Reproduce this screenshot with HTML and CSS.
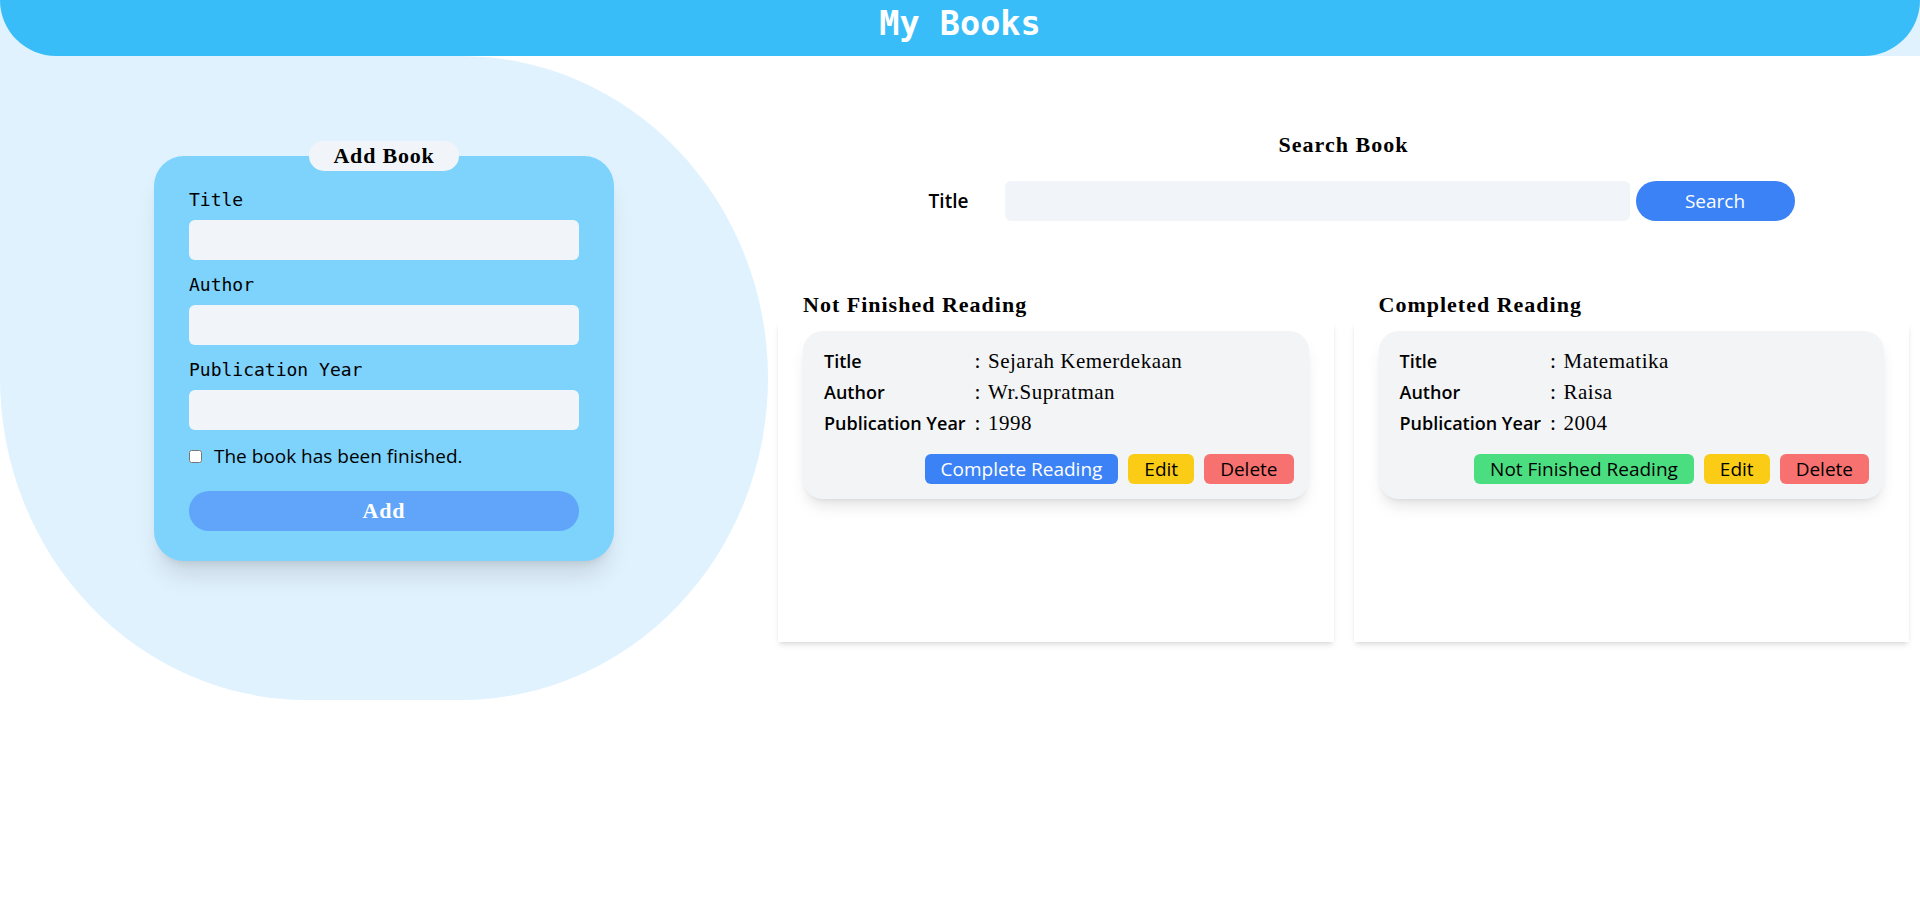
FILE: index.html
```html
<!DOCTYPE html>
<html lang="en">
<head>
<meta charset="utf-8">
<title>My Books</title>
<link rel="stylesheet" href="styles.css">
</head>
<body>
<div class="top">
  <header class="header">My Books</header>
</div>
<main class="main">
  <section class="left">
    <form class="add-card">
      <h2 class="pill">Add Book</h2>
      <label class="field-label" for="t">Title</label>
      <input class="field" id="t" type="text">
      <label class="field-label" for="a">Author</label>
      <input class="field" id="a" type="text">
      <label class="field-label" for="y">Publication Year</label>
      <input class="field" id="y" type="text">
      <div class="check-row">
        <input class="check" type="checkbox" id="c">
        <label class="check-text" for="c">The book has been finished.</label>
      </div>
      <button class="add-btn" type="button">Add</button>
    </form>
  </section>
  <section class="right">
    <h2 class="search-title">Search Book</h2>
    <form class="search-row">
      <label class="search-label" for="s">Title</label>
      <input class="search-input" id="s" type="text">
      <button class="search-btn" type="button">Search</button>
    </form>
    <div class="shelves">
      <div class="shelf">
        <h2 class="shelf-title">Not Finished Reading</h2>
        <div class="shelf-panel">
          <article class="book">
            <div class="book-info">
              <span class="k">Title</span><span class="c">:</span><span class="v">Sejarah Kemerdekaan</span>
              <span class="k">Author</span><span class="c">:</span><span class="v">Wr.Supratman</span>
              <span class="k">Publication Year</span><span class="c">:</span><span class="v">1998</span>
            </div>
            <div class="actions">
              <button class="btn btn-blue" type="button">Complete Reading</button>
              <button class="btn btn-yellow" type="button">Edit</button>
              <button class="btn btn-red" type="button">Delete</button>
            </div>
          </article>
        </div>
      </div>
      <div class="shelf">
        <h2 class="shelf-title">Completed Reading</h2>
        <div class="shelf-panel">
          <article class="book">
            <div class="book-info">
              <span class="k">Title</span><span class="c">:</span><span class="v">Matematika</span>
              <span class="k">Author</span><span class="c">:</span><span class="v">Raisa</span>
              <span class="k">Publication Year</span><span class="c">:</span><span class="v">2004</span>
            </div>
            <div class="actions">
              <button class="btn btn-green" type="button">Not Finished Reading</button>
              <button class="btn btn-yellow" type="button">Edit</button>
              <button class="btn btn-red" type="button">Delete</button>
            </div>
          </article>
        </div>
      </div>
    </div>
  </section>
</main>
</body>
</html>
```
FILE: styles.css
```css
* { box-sizing: border-box; }

body {
  margin: 0;
  background: #ffffff;
  color: #000000;
  font-family: "Open Sans", "Noto Sans", sans-serif;
}

.top {
  background: #e0f2fe;
}

.header {
  height: 56px;
  background: #38bdf8;
  border-radius: 0 0 56px 56px;
  color: #ffffff;
  text-align: center;
  font-family: "DejaVu Sans Mono", monospace;
  font-weight: bold;
  font-size: 33.5px;
  line-height: 47px;
}

.main {
  display: flex;
  align-items: flex-start;
}

/* left blob */
.left {
  width: 40%;
  height: 644px;
  background: #e0f2fe;
  border-radius: 0 40% 40% 40% / 0 50% 50% 50%;
  padding-top: 100px;
  display: flex;
  justify-content: center;
  align-items: flex-start;
}

.add-card {
  position: relative;
  width: 460px;
  background: #7dd3fc;
  border-radius: 30px;
  padding: 32px 35px 30px;
  box-shadow: 0 20px 25px -5px rgba(0, 0, 0, 0.1), 0 8px 10px -6px rgba(0, 0, 0, 0.1);
}

.pill {
  position: absolute;
  top: -15px;
  left: 50%;
  transform: translateX(-50%);
  width: 150px;
  height: 30px;
  margin: 0;
  border-radius: 15px;
  background: #f1f5f9;
  text-align: center;
  font-family: "Liberation Serif", serif;
  font-weight: bold;
  font-size: 22px;
  letter-spacing: 0.8px;
  line-height: 30px;
}

.field-label {
  display: block;
  font-family: "DejaVu Sans Mono", monospace;
  font-size: 18px;
  line-height: 24px;
  margin-bottom: 8px;
}

.field {
  display: block;
  width: 100%;
  height: 40px;
  border: none;
  border-radius: 6px;
  background: #f1f5f9;
  margin: 0 0 13px;
}

.check-row {
  display: flex;
  align-items: center;
  height: 26px;
  gap: 12px;
}

.check {
  margin: 0;
  width: 13px;
  height: 13px;
}

.check-text {
  font-size: 19px;
}

.add-btn {
  display: block;
  width: 100%;
  height: 40px;
  margin-top: 22px;
  border: none;
  border-radius: 20px;
  background: #60a5fa;
  color: #ffffff;
  font-family: "Liberation Serif", serif;
  font-weight: bold;
  font-size: 22px;
  letter-spacing: 0.8px;
}

/* right side */
.right {
  width: 60%;
  padding: 76px 11px 0 10px;
}

.search-title {
  margin: 0;
  text-align: center;
  font-family: "Liberation Serif", serif;
  font-weight: bold;
  font-size: 22px;
  letter-spacing: 1px;
  line-height: 26px;
}

.search-row {
  display: flex;
  width: 902px;
  height: 40px;
  margin: 23px auto 0;
}

.search-label {
  width: 112px;
  text-align: center;
  line-height: 40px;
  font-size: 19px;
  font-weight: 600;
}

.search-input {
  flex: 1;
  height: 40px;
  border: none;
  border-radius: 6px;
  background: #f1f5f9;
}

.search-btn {
  width: 159px;
  height: 40px;
  margin-left: 6px;
  border: none;
  border-radius: 20px;
  background: #3b82f6;
  color: #ffffff;
  font-family: inherit;
  font-size: 19px;
}

.shelves {
  display: grid;
  grid-template-columns: 1fr 1fr;
  gap: 20px;
  margin-top: 71px;
}

.shelf-title {
  margin: 0 0 4px;
  padding-left: 25px;
  font-family: "Liberation Serif", serif;
  font-weight: bold;
  font-size: 22px;
  letter-spacing: 1px;
  line-height: 26px;
}

.shelf-panel {
  height: 320px;
  background: #ffffff;
  padding: 9px 25px;
  box-shadow: 0 4px 6px -1px rgba(0, 0, 0, 0.1), 0 2px 4px -2px rgba(0, 0, 0, 0.1);
}

.book {
  background: #f3f4f6;
  border-radius: 20px;
  padding: 15px 15px 15px 21px;
  box-shadow: 0 10px 15px -3px rgba(0, 0, 0, 0.1), 0 4px 6px -4px rgba(0, 0, 0, 0.1);
}

.book-info {
  display: grid;
  grid-template-columns: 151px 13px 1fr;
  line-height: 31px;
}

.k {
  font-size: 18px;
  font-weight: 600;
  white-space: nowrap;
}

.c {
  font-size: 18px;
  font-weight: 600;
}

.v {
  font-family: "Liberation Serif", serif;
  font-size: 21px;
  letter-spacing: 0.5px;
}

.actions {
  display: flex;
  justify-content: flex-end;
  gap: 10px;
  margin-top: 15px;
}

.btn {
  height: 30px;
  padding: 0 16px;
  border: none;
  border-radius: 6px;
  font-family: inherit;
  font-size: 19px;
  color: #000000;
}

.btn-blue { background: #3b82f6; color: #ffffff; }
.btn-green { background: #4ade80; }
.btn-yellow { background: #facc15; }
.btn-red { background: #f87171; }
```
